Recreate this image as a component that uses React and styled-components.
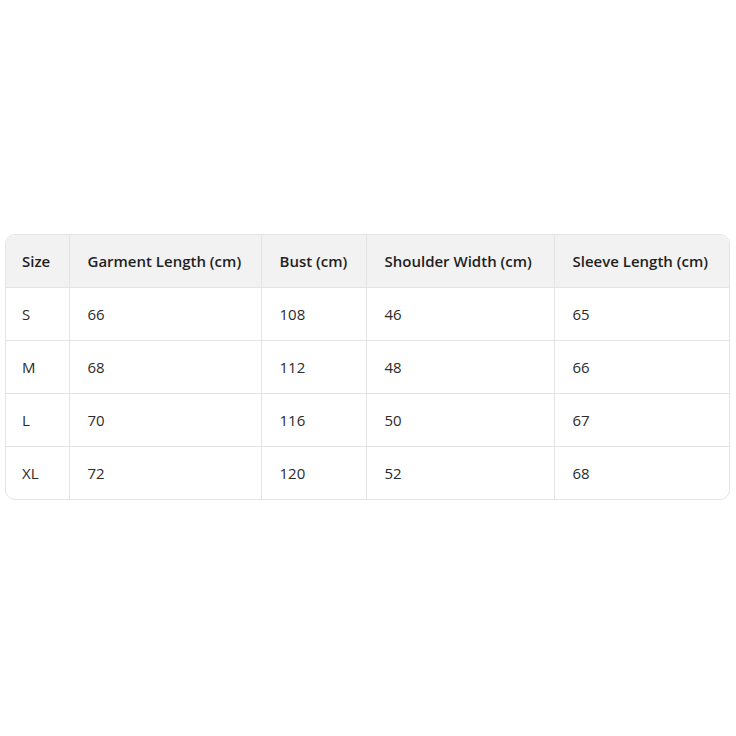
import React from "react";
import styled, { createGlobalStyle } from "styled-components";

const Global = createGlobalStyle`
  html, body { margin: 0; padding: 0; background: #fff; }
  body { font-family: "Open Sans", "Noto Sans", "Liberation Sans", sans-serif; }
`;

const Page = styled.div`
  min-height: 736px;
  display: flex;
  align-items: center;
  padding: 0 6px 2px 5px;
  box-sizing: border-box;
`;

const Frame = styled.div`
  width: 100%;
  border: 1px solid #e4e4e4;
  border-radius: 10px;
  overflow: hidden;
`;

const Table = styled.table`
  width: 100%;
  border-collapse: collapse;
  table-layout: fixed;
  font-size: 15px;
  color: #2b2b2b;
`;

const Th = styled.th`
  background: #f2f2f2;
  font-weight: 600;
  color: #1f1f1f;
  text-align: left;
  height: 52px;
  padding: 0 0 0 18px;
  border-left: 1px solid #e4e4e4;
  border-bottom: 1px solid #e4e4e4;
  white-space: nowrap;
  &:first-child { border-left: none; padding-left: 16px; }
`;

const Td = styled.td`
  height: 52px;
  padding: 0 0 0 18px;
  border-left: 1px solid #e4e4e4;
  border-top: 1px solid #e4e4e4;
  &:first-child { border-left: none; padding-left: 16px; }
`;

const Tr = styled.tr`
  &:first-child td { border-top: none; }
`;

const cols = [63, 192, 105, 188, 176];
const headers = ["Size", "Garment Length (cm)", "Bust (cm)", "Shoulder Width (cm)", "Sleeve Length (cm)"];
const rows = [
  ["S", "66", "108", "46", "65"],
  ["M", "68", "112", "48", "66"],
  ["L", "70", "116", "50", "67"],
  ["XL", "72", "120", "52", "68"],
];

export default function App() {
  return (
    <>
      <Global />
      <Page>
        <Frame>
          <Table>
            <colgroup>
              {cols.map((w, i) => (
                <col key={i} style={{ width: w }} />
              ))}
            </colgroup>
            <thead>
              <tr>
                {headers.map((h) => (
                  <Th key={h}>{h}</Th>
                ))}
              </tr>
            </thead>
            <tbody>
              {rows.map((r) => (
                <Tr key={r[0]}>
                  {r.map((c, i) => (
                    <Td key={i}>{c}</Td>
                  ))}
                </Tr>
              ))}
            </tbody>
          </Table>
        </Frame>
      </Page>
    </>
  );
}
